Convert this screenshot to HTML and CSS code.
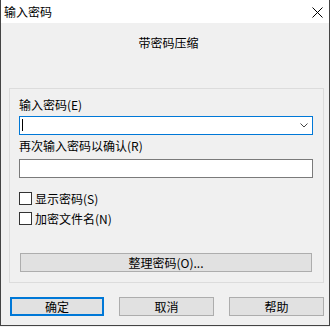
FILE: index.html
```html
<!DOCTYPE html>
<html lang="zh-CN">
<head>
  <meta charset="UTF-8">
  <title>输入密码</title>
  <link rel="stylesheet" href="styles.css">
</head>
<body>
  <div class="window">
    <div class="titlebar">
      <span class="title">输入密码</span>
      <svg class="close" width="11" height="11" viewBox="0 0 11 11">
        <path d="M0.5 0.5 L10.5 10.5 M10.5 0.5 L0.5 10.5" stroke="#000" stroke-width="1" fill="none"/>
      </svg>
    </div>
    <div class="content">
      <div class="heading">带密码压缩</div>
      <div class="group">
        <label class="field-label">输入密码(E)</label>
        <div class="combo">
          <span class="caret"></span>
          <svg class="chevron" width="8" height="5" viewBox="0 0 8 5">
            <path d="M0.5 0.5 L4 4 L7.5 0.5" stroke="#444" stroke-width="1" fill="none"/>
          </svg>
        </div>
        <label class="field-label second">再次输入密码以确认(R)</label>
        <div class="textbox"></div>
        <div class="checks">
          <div class="check-row"><span class="box"></span>显示密码(S)</div>
          <div class="check-row"><span class="box"></span>加密文件名(N)</div>
        </div>
        <div class="btn wide">整理密码(O)...</div>
      </div>
      <div class="actions">
        <div class="btn default">确定</div>
        <div class="btn">取消</div>
        <div class="btn">帮助</div>
      </div>
    </div>
  </div>
</body>
</html>
```

FILE: styles.css
```css
* {
  margin: 0;
  padding: 0;
  box-sizing: border-box;
  font-family: "Noto Sans CJK SC", "Liberation Sans", sans-serif;
}

body {
  background-color: #f0f0f0;
  width: 330px;
  height: 327px;
  overflow: hidden;
  font-size: 12px;
  color: #000;
}

.window {
  width: 330px;
  height: 326px;
  border: 1px solid #444;
  border-top: none;
  background-color: #f0f0f0;
  display: flex;
  flex-direction: column;
}

.titlebar {
  height: 23px;
  background-color: #fff;
  display: flex;
  align-items: center;
  justify-content: space-between;
  padding-left: 3px;
  padding-right: 6px;
}

.title {
  line-height: 16px;
}

.close {
  display: block;
  margin-top: 1px;
}

.content {
  padding: 0 5px 0 8px;
  display: flex;
  flex-direction: column;
}

.heading {
  text-align: center;
  line-height: 16px;
  margin-top: 12px;
  padding-left: 4px;
}

.group {
  margin-top: 37px;
  border: 1px solid #dcdcdc;
  padding: 8px 10px 10px 9px;
  display: flex;
  flex-direction: column;
}

.field-label {
  line-height: 16px;
  display: block;
}

.combo {
  margin-top: 3px;
  height: 19px;
  border: 1px solid #0078d7;
  background-color: #fff;
  position: relative;
}

.caret {
  position: absolute;
  left: 2px;
  top: 2px;
  width: 1px;
  height: 12px;
  background-color: #000;
}

.chevron {
  position: absolute;
  right: 4px;
  top: 6px;
}

.second {
  margin-top: 3px;
}

.textbox {
  margin-top: 5px;
  height: 19px;
  border: 1px solid #7a7a7a;
  background-color: #fff;
}

.checks {
  margin-top: 10px;
}

.check-row {
  height: 20px;
  display: flex;
  align-items: center;
  gap: 3px;
}

.box {
  width: 13px;
  height: 13px;
  border: 1px solid #333;
  background-color: #fff;
}

.btn {
  height: 19px;
  border: 1px solid #adadad;
  background-color: #e1e1e1;
  display: flex;
  align-items: center;
  justify-content: center;
  width: 95px;
}

.wide {
  width: auto;
  margin-top: 25px;
  margin-left: 1px;
  margin-right: 1px;
}

.actions {
  margin-top: 14px;
  margin-left: 1px;
  display: flex;
  gap: 15px;
}

.default {
  width: 94px;
  border: 2px solid #0078d7;
}
```
